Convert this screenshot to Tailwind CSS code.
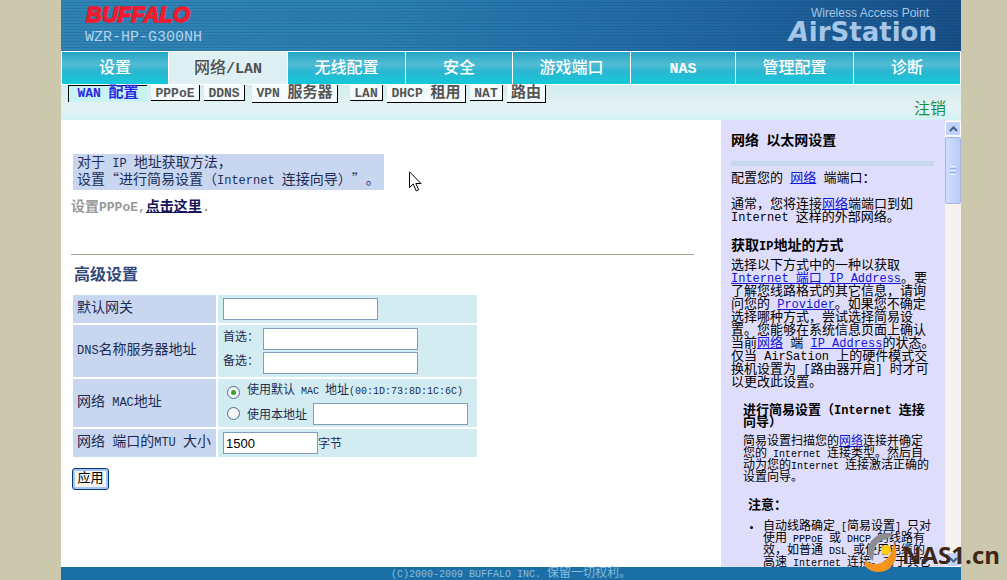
<!DOCTYPE html>
<html lang="zh-CN">
<head>
<meta charset="utf-8">
<title>AirStation WZR-HP-G300NH</title>
<script src="https://cdn.jsdelivr.net/npm/@tailwindcss/browser@4"></script>
</head>
<body class="flex h-screen flex-col overflow-hidden bg-[#ccc8ae] pr-[46px] pl-[61px] font-['Liberation_Mono','Noto_Sans_CJK_SC',monospace] text-[14px] leading-[16px] text-[#1c2c54] [text-spacing-trim:space-all] [&_span]:leading-none">

<header class="flex h-[51px] shrink-0 items-start justify-between bg-[linear-gradient(100deg,#2f84b4_0%,#2a7fb0_35%,#20659f_75%,#174f86_100%)]">
  <div class="flex h-full w-full justify-between bg-[repeating-linear-gradient(0deg,rgba(0,20,80,0.12)_0px,rgba(0,20,80,0.12)_1px,transparent_1px,transparent_3px)] pr-[24px] pl-[24px]">
    <div>
      <svg class="block h-[28px] w-[120px]" viewBox="0 0 120 28" role="img" aria-label="BUFFALO"><text x="1" y="22" font-family="Liberation Sans" font-size="22" font-weight="bold" font-style="italic" fill="#ee1c2e" stroke="#ee1c2e" stroke-width="1.500">BUFFALO</text></svg>
      <p class="text-[15px] leading-[20px] text-[#b4d2ea]">WZR-HP-G300NH</p>
    </div>
    <div class="pt-[6px] text-right text-[#a5c6e6]">
      <p class="pr-[8px] font-['Liberation_Sans',sans-serif] text-[12px] leading-[14px]">Wireless Access Point</p>
      <p class="font-['DejaVu_Sans',sans-serif] text-[26px] leading-[24px] font-bold"><i>A</i>irStation</p>
    </div>
  </div>
</header>

<nav class="flex h-[34px] shrink-0 gap-px border border-white bg-white text-center text-[16px] leading-[30px] font-medium text-white [&_span]:text-[15px] [&_span]:font-bold [&_a]:bg-[linear-gradient(180deg,#22a6c6_0%,#52bcd4_38%,#2cb6d0_60%,#12c8dc_100%)] [&_a]:pt-[2px]">
  <a href="#" class="flex-[106]">设置</a>
  <a href="#" class="flex-[118] bg-none! bg-[#def0f4] text-[#505050]">网络<span>/LAN</span></a>
  <a href="#" class="flex-[117]">无线配置</a>
  <a href="#" class="flex-[106]">安全</a>
  <a href="#" class="flex-[117]">游戏端口</a>
  <a href="#" class="flex-[104]"><span>NAS</span></a>
  <a href="#" class="flex-[117]">管理配置</a>
  <a href="#" class="flex-[106]">诊断</a>
</nav>

<div class="flex h-[35px] shrink-0 items-start justify-between bg-[linear-gradient(180deg,#d2ecf0_0%,#e6f2f4_65%,#d0f2f4_100%)] pr-[15px] pl-[7px]">
  <div class="flex items-start text-center text-[15px] leading-[18px] font-bold whitespace-nowrap text-[#555] [&_a]:border-black [&_span]:text-[13px]">
    <a href="#" class="mr-1 h-[17px] w-[79px] border-t border-l bg-[#c8f2f4] leading-[16px] text-[#2828e0]"><span>WAN </span>配置</a>
    <a href="#" class="mr-1 h-[16px] w-[49px] border-r border-b bg-[#f4fbfc]"><span>PPPoE</span></a>
    <a href="#" class="mr-[7px] h-[16px] w-[41px] border-r border-b bg-[#f4fbfc]"><span>DDNS</span></a>
    <a href="#" class="mr-3 h-[18px] w-[86px] border-r border-b bg-[#f4fbfc]"><span>VPN </span>服务器</a>
    <a href="#" class="mr-1 h-[16px] w-[33px] border-r border-b bg-[#f4fbfc]"><span>LAN</span></a>
    <a href="#" class="mr-1 h-[18px] w-[79px] border-r border-b bg-[#f4fbfc]"><span>DHCP </span>租用</a>
    <a href="#" class="mr-1 h-[16px] w-[33px] border-r border-b bg-[#f4fbfc]"><span>NAT</span></a>
    <a href="#" class="h-[18px] w-[39px] border-r border-b bg-[#f4fbfc]">路由</a>
  </div>
  <a href="#" class="pt-[16px] text-[16px] leading-[18px] text-[#159048]">注销</a>
</div>

<div class="flex min-h-0 flex-1 bg-white">
  <main class="min-w-0 flex-1 overflow-hidden pt-[34px] pr-[27px] pl-[10px]">
    <p class="ml-[2px] w-[311px] bg-[#c8d6f0] px-1 pt-px pb-[2px] whitespace-nowrap [&_span]:text-[12px]">对于<span> IP </span>地址获取方法，<br>设置<span class="font-['Noto_Sans_CJK_SC',sans-serif] text-[14px]!">“</span>进行简易设置（<span>Internet </span>连接向导）<span class="font-['Noto_Sans_CJK_SC',sans-serif] text-[14px]!">”</span>。</p>
    <p class="mt-[9px] font-bold text-[#999] [&_span]:text-[13px]">设置<span>PPPoE,</span><a href="#" class="text-[#14145c] underline">点击这里</a>.</p>
    <hr class="mt-[39px] border-[#a8a494]">
    <form>
      <h2 class="mt-[12px] ml-[3px] text-[16px] leading-[18px] font-bold text-[#30487c]">高级设置</h2>
      <table class="mt-[8px] w-[408px] table-fixed border-separate border-spacing-[2px] [&_td]:bg-[#d2ecf2] [&_td]:p-0 [&_td]:pl-[5px] [&_td]:text-[12px] [&_th]:bg-[#c8d6f0] [&_th]:p-0 [&_th]:pb-[2px] [&_th]:pl-1 [&_th]:text-left [&_th]:font-normal [&_th]:whitespace-nowrap [&_th_span]:text-[12px] [&_td_span]:text-[10px]">
        <colgroup><col class="w-[143px]"><col></colgroup>
        <tr class="h-[28px]"><th scope="row"><label for="gw">默认网关</label></th>
          <td><input id="gw" type="text" class="block h-[22px] w-[155px] border border-[#7f9db9] bg-white px-1"></td></tr>
        <tr class="h-[52px]"><th scope="row"><span>DNS</span>名称服务器地址</th>
          <td><div class="flex flex-col gap-[2px]">
            <div class="flex items-start"><label for="d1" class="w-[40px] pt-[2px]">首选：</label><input id="d1" type="text" class="h-[22px] w-[155px] border border-[#7f9db9] bg-white px-1"></div>
            <div class="flex items-start"><label for="d2" class="w-[40px] pt-[2px]">备选：</label><input id="d2" type="text" class="h-[22px] w-[155px] border border-[#7f9db9] bg-white px-1"></div>
          </div></td></tr>
        <tr class="h-[48px]"><th scope="row">网络<span> MAC</span>地址</th>
          <td><div class="flex flex-col whitespace-nowrap">
            <div class="flex h-[21px] items-center pl-1"><input id="m1" type="radio" name="mac" checked class="mr-[7px] size-[13px] appearance-none rounded-full border border-[#4a6a90] bg-[radial-gradient(circle,#2fa52f_0,#2fa52f_2px,#f6f6f2_3px)]"><label for="m1" class="pb-[2px]">使用默认<span> MAC </span>地址<span>(00:1D:73:8D:1C:6C)</span></label></div>
            <div class="flex h-[22px] items-center pl-1"><input id="m2" type="radio" name="mac" class="mr-[7px] size-[13px] appearance-none rounded-full border border-[#4a6a90] bg-[#f6f6f2]"><label for="m2" class="w-[66px] pt-1">使用本地址</label><input type="text" aria-label="MAC 地址" class="h-[22px] w-[155px] border border-[#7f9db9] bg-white px-1"></div>
          </div></td></tr>
        <tr class="h-[28px]"><th scope="row"><label for="mtu">网络<span> </span>端口的<span>MTU </span>大小</label></th>
          <td><div class="flex items-center"><input id="mtu" type="text" value="1500" class="h-[22px] w-[95px] border border-[#7f9db9] bg-white px-[2px] font-['Liberation_Sans',sans-serif] text-[13px] text-black"><label for="mtu" class="pt-1">字节</label></div></td></tr>
      </table>
      <button type="button" class="mt-[9px] ml-px block h-[22px] w-[37px] rounded-[3px] border border-[#003c74] bg-[#f6f5f0] text-[13px] leading-[16px] text-black shadow-[inset_0_0_0_2px_#a8c4f0]">应用</button>
    </form>
  </main>

  <aside class="w-[224px] shrink-0 overflow-hidden bg-[#dedefc] pt-[13px] pl-[10px] text-[13px] leading-[13px] whitespace-nowrap text-black [&_a]:text-[#1414d8] [&_a]:underline [&_span]:text-[12px]">
    <h2 class="text-[14px] leading-[16px] font-bold">网络<span> </span>以太网设置</h2>
    <div class="mt-[12px] mr-[11px] h-[5px] bg-[#c6d8ec]"></div>
    <p class="mt-[6px]">配置您的<span> </span><a href="#">网络</a><span> </span>端端口：</p>
    <p class="mt-[13px]">通常，您将连接<a href="#">网络</a>端端口到如<br><span>Internet </span>这样的外部网络。</p>
    <h3 class="mt-[15px] text-[14px] leading-[14px] font-bold">获取<span>IP</span>地址的方式</h3>
    <p class="mt-[6px]">选择以下方式中的一种以获取<br><a href="#"><span>Internet </span>端口<span> IP Address</span></a>。要<br>了解您线路格式的其它信息，请询<br>问您的<span> </span><a href="#"><span>Provider</span></a>。如果您不确定<br>选择哪种方式，尝试选择简易设<br>置。您能够在系统信息页面上确认<br>当前<a href="#">网络</a><span> </span>端<span> </span><a href="#"><span>IP Address</span></a>的状态。<br>仅当<span> AirSation </span>上的硬件模式交<br>换机设置为<span> [</span>路由器开启<span>] </span>时才可<br>以更改此设置。</p>
    <div class="pl-3 text-[12px] leading-[12px]">
      <h4 class="mt-[16px] text-[13px] leading-[12px] font-bold">进行简易设置（<span>Internet </span>连接<br>向导）</h4>
      <p class="mt-[7px] [&_span]:text-[10px]!">简易设置扫描您的<a href="#">网络</a>连接并确定<br>您的<span> Internet </span>连接类型。然后自<br>动为您的<span>Internet </span>连接激活正确的<br>设置向导。</p>
      <h4 class="mt-[16px] pl-[5px] text-[13px] leading-[12px] font-bold">注意：</h4>
      <ul class="mt-[9px] list-disc pl-[20px] [&_span]:text-[10px]!">
        <li>自动线路确定<span> [</span>简易设置<span>] </span>只对<br>使用<span> PPPoE </span>或<span> DHCP </span>的线路有<br>效，如普通<span> DSL </span>或使用电缆的<br>高速<span> Internet </span>连接。对于其它</li>
      </ul>
    </div>
  </aside>

  <!-- scroll bar of the help column -->
  <div class="flex w-[16px] shrink-0 flex-col gap-px bg-[#f6f3ee] pt-px" aria-hidden="true">
    <div class="flex h-[15px] items-center justify-center rounded-[2px] border border-white bg-[#c2d2fa]"><svg class="h-[6px] w-[9px]" viewBox="0 0 9 6" fill="none" stroke="#445c8c" stroke-width="2"><path d="M1 5 4.500 1.500 8 5"/></svg></div>
    <div class="flex h-[67px] flex-col items-center justify-center gap-px rounded-[2px] border border-[#a4b8e4] bg-[linear-gradient(90deg,#d0defe,#b8ccf8)]">
      <i class="h-px w-[6px] bg-[#eef4fe]"></i><i class="h-px w-[6px] bg-[#8cb0f8]"></i><i class="h-px w-[6px] bg-[#eef4fe]"></i><i class="h-px w-[6px] bg-[#8cb0f8]"></i><i class="h-px w-[6px] bg-[#eef4fe]"></i>
    </div>
    <div class="mt-auto flex h-[15px] items-center justify-center rounded-[2px] border border-white bg-[#c2d2fa]"><svg class="h-[6px] w-[9px]" viewBox="0 0 9 6" fill="none" stroke="#445c8c" stroke-width="2"><path d="M1 1 4.500 4.500 8 1"/></svg></div>
  </div>
</div>

<footer class="h-[13px] shrink-0 bg-[#1a70a6] text-center text-[12px] leading-[15px] text-[#88bcdc] [&_span]:text-[10px]"><span>(C)2000-2009 BUFFALO INC. </span>保留一切权利。</footer>

<!-- site badge floating over the page corner -->
<div class="absolute right-[7px] bottom-[6px] flex items-center">
  <svg class="h-[43px] w-[36px]" viewBox="0 0 36 43" aria-hidden="true">
    <path d="M27 2C14 1 4 9 4 20c0 4 2 8 5 10 1-9 1-14 5-18 3-3 8-4 12-6 2-1 3-3 1-4z" fill="#8b8d90"/>
    <path d="M30 11c4 10 3 18-3 25-6 6-17 7-24 1-2-2-3-5-2-8 6 5 14 5 19 1 6-4 8-10 10-19z" fill="#f7941d"/>
    <circle cx="22" cy="19" r="5" fill="#fbcf14"/>
  </svg>
  <strong class="ml-[2px] pt-[4px] font-['Open_Sans',sans-serif] text-[24px] leading-[28px] font-bold text-[#3e2815]">NAS1.cn</strong>
</div>

<!-- mouse pointer -->
<svg class="absolute top-[171px] left-[409px] h-[21px] w-[13px]" viewBox="0 0 13 21" aria-hidden="true"><path d="M.5.800V16.500L4.200 13l3 6.800 2.500-1L6.800 12.500h5.200z" fill="#fff" stroke="#000"/></svg>
</body>
</html>
